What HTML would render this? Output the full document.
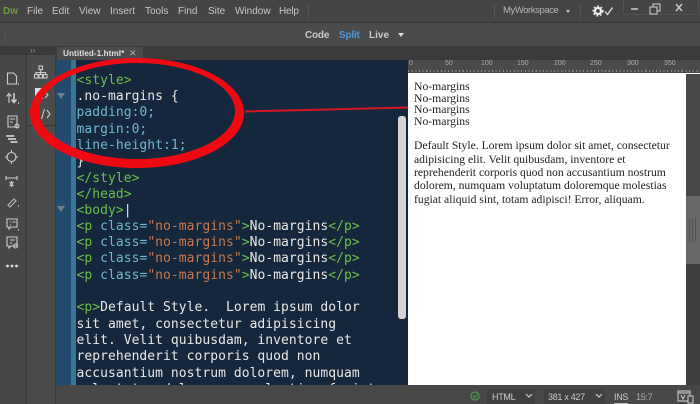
<!DOCTYPE html>
<html><head><meta charset="utf-8">
<style>
html,body{margin:0;padding:0;background:#484848}
#r{position:relative;width:700px;height:404px;overflow:hidden;background:#484848;font-family:"Liberation Sans",sans-serif;color:#ccc;filter:blur(.3px)}
.a{position:absolute}
.m{position:absolute;top:5px;font-size:10px;line-height:13px;color:#c8c8c8;white-space:nowrap}
.c{position:absolute;left:76.5px;font-family:"DejaVu Sans Mono","Liberation Mono",monospace;font-size:13px;letter-spacing:.04px;line-height:16px;color:#e8e8e8;white-space:pre}
.g{color:#6cc04a}.b{color:#6fb9d0}.o{color:#c9784f}.w{color:#e8e8e8}
.p{position:absolute;left:414px;font-family:"Liberation Serif",serif;font-size:11.7px;line-height:12px;color:#222;white-space:nowrap}
.l{position:absolute;left:414px;font-family:"Liberation Serif",serif;font-size:11.65px;line-height:13px;color:#222;white-space:nowrap}
.t{position:absolute;top:60px;font-size:7px;line-height:8px;color:#aaa}
.s{position:absolute;top:391px;font-size:9px;letter-spacing:-.3px;line-height:12px;color:#ccc;white-space:nowrap}
</style></head><body><div id="r">
<!-- bars -->
<div class="a" style="left:0;top:0;width:700px;height:22px;background:#454545"></div>
<div class="a" style="left:0;top:22px;width:700px;height:1px;background:#363636"></div>
<div class="a" style="left:0;top:23px;width:700px;height:23px;background:#4a4a4a"></div>
<div class="a" style="left:0;top:46px;width:700px;height:14px;background:#3b3b3b"></div>
<div class="a" style="left:5px;top:28px;width:1px;height:14px;background:#555"></div>
<div class="m" style="left:3px;color:#6f9a42;font-weight:bold">Dw</div>
<div class="m" style="left:27px">File</div>
<div class="m" style="left:52px">Edit</div>
<div class="m" style="left:79px">View</div>
<div class="m" style="left:110px">Insert</div>
<div class="m" style="left:145px">Tools</div>
<div class="m" style="left:178px">Find</div>
<div class="m" style="left:208px">Site</div>
<div class="m" style="left:235px">Window</div>
<div class="m" style="left:279px;letter-spacing:-.2px">Help</div>
<div class="a" style="left:308px;top:4px;width:1px;height:14px;background:#555"></div>
<div class="a" style="left:494px;top:4px;width:1px;height:14px;background:#555"></div>
<div class="m" style="left:503px;top:4px;font-size:9.5px;letter-spacing:-.42px;color:#b5b5b5">MyWorkspace</div>
<div class="a" style="left:566px;top:10px;border:2.5px solid transparent;border-top:3px solid #ccc;border-bottom:0"></div>
<div class="a" style="left:580px;top:4px;width:1px;height:14px;background:#555"></div>
<svg class="a" style="left:592px;top:4px" width="24" height="14" viewBox="0 0 24 14">
<circle cx="6" cy="7" r="3" fill="none" stroke="#eee" stroke-width="2.2"/><circle cx="6" cy="7" r="4.8" fill="none" stroke="#eee" stroke-width="1.5" stroke-dasharray="1.8 1.8"/>
<path d="M13 7.5l2.5 3 5-7" fill="none" stroke="#ddd" stroke-width="1.3"/></svg>
<div class="a" style="left:623px;top:-2px;width:74px;height:15px;border:1px solid #525252;border-radius:3px"></div>
<svg class="a" style="left:626px;top:2px" width="72" height="14" viewBox="0 0 72 14">
<path d="M5 7h7" stroke="#aaa" stroke-width="2"/>
<path d="M24 5h7v7h-7zM27 5V2h7v7h-3" fill="none" stroke="#bbb" stroke-width="1.2"/>
<path d="M50 2l6 7M56 2l-6 7" stroke="#ccc" stroke-width="1.4"/></svg>
<div class="a" style="left:305px;top:29px;font-size:10px;letter-spacing:-.2px;line-height:13px;font-weight:bold;color:#c8c8c8">Code</div>
<div class="a" style="left:339px;top:29px;font-size:10px;letter-spacing:-.2px;line-height:13px;font-weight:bold;color:#4f97d8">Split</div>
<div class="a" style="left:369px;top:29px;font-size:10px;line-height:13px;font-weight:bold;color:#c8c8c8">Live</div>
<div class="a" style="left:398px;top:33px;border:3.5px solid transparent;border-top:4px solid #ddd;border-bottom:0"></div>
<!-- tab -->
<div class="a" style="left:57px;top:47px;width:86px;height:13px;background:#4b4b4b"></div>
<div class="a" style="left:63px;top:48px;font-size:8.3px;line-height:11px;font-weight:bold;color:#ddd;white-space:nowrap">Untitled-1.html*</div>
<div class="a" style="left:129px;top:47px;font-size:9px;line-height:13px;color:#aaa">✕</div>
<div class="a" style="left:30px;top:46px;font-size:8px;line-height:10px;color:#999">››</div>
<!-- left cols -->
<div class="a" style="left:0;top:55px;width:26px;height:349px;background:#474747"></div>
<div class="a" style="left:26px;top:55px;width:1px;height:349px;background:#383838"></div>
<div class="a" style="left:27px;top:55px;width:28px;height:349px;background:#4b4b4b"></div>
<div class="a" style="left:27px;top:125px;width:28px;height:1px;background:#383838"></div>
<div class="a" style="left:55px;top:55px;width:1px;height:349px;background:#3c3c3c"></div>
<div class="a" style="left:35px;top:88px;width:8px;height:11px;background:#ddd"></div>
<svg class="a" style="left:0;top:60px" width="56" height="220" viewBox="0 0 56 220" fill="none" stroke="#ccc" stroke-width="1.1">
<path d="M7.5 13h6l3 3v8h-9z"/><path d="M18 24h1" stroke-width="1.5"/>
<path d="M9 43v-9M6.500 36.500l2.500-3 2.500 3"/><path d="M14 33v9M11.500 39.500l2.500 3 2.500-3" stroke-width="1.600"/><path d="M18 43h1" stroke-width="1.500"/>
<path d="M8 56h9v11H8z"/><path d="M10 59h5M10 62h3"/><circle cx="17" cy="66" r="2"/>
<path d="M6 76h8M8 79h8M10.500 82h7" stroke-width="1.700"/>
<circle cx="11.500" cy="97" r="4.500"/><path d="M11.500 90v3M11.500 101v3M5 97h3M15 97h3"/>
<path d="M6 118h11M6 116v4M17 116v4"/><path d="M9.500 122l4 4M13.500 122l-4 4M11.500 121v6"/>
<path d="M8 145l6-6 2 2-6 6z" stroke="#bbb"/><path d="M18 146h1" stroke-width="1.500"/>
<path d="M7 159h10v8h-6l-2 2v-2H7z"/><path d="M10 162h1M12.500 162h3M10 165h1"/><path d="M18 170h1" stroke-width="1.500"/>
<path d="M7 177h10v9h-6l-2 2v-2H7z"/><path d="M10 180h5M10 183h2"/><circle cx="15.500" cy="186" r="2"/>
<rect x="39" y="6" width="3.500" height="3.500"/><path d="M40.700 9.500v3M36 14.500v-2h9.500v2M40.700 12.500v2"/><rect x="34.500" y="14.500" width="3.500" height="3.500"/><rect x="39" y="14.500" width="3.500" height="3.500"/><rect x="43.500" y="14.500" width="3.500" height="3.500"/>
<path d="M45 32l3 3-3 3"/>
<path d="M39 50l-3 4 3 4M47 50l3 4-3 4M44.500 49l-3 10"/>
</svg>
<svg class="a" style="left:5px;top:263px" width="14" height="6"><circle cx="2.500" cy="3" r="1.400" fill="#ddd"/><circle cx="7" cy="3" r="1.400" fill="#ddd"/><circle cx="11.500" cy="3" r="1.400" fill="#ddd"/></svg>
<!-- editor -->
<div class="a" style="left:56px;top:60px;width:352px;height:325px;background:#14273c"></div>
<div class="a" style="left:56px;top:60px;width:15px;height:325px;background:#234b6e"></div>
<div class="a" style="left:71px;top:60px;width:5px;height:325px;background:#3c7596"></div>
<div class="a" style="left:57px;top:93px;border:4px solid transparent;border-top:6px solid #6f7f8c;border-bottom:0"></div>
<div class="a" style="left:57px;top:206px;border:4px solid transparent;border-top:6px solid #6f7f8c;border-bottom:0"></div>
<div class="c g" style="top:72.500px">&lt;style&gt;</div>
<div class="c" style="top:89px">.no-margins {</div>
<div class="c b" style="top:105px">padding:0;</div>
<div class="c b" style="top:121.500px">margin:0;</div>
<div class="c b" style="top:138px">line-height:1;</div>
<div class="c" style="top:154px">}</div>
<div class="c g" style="top:170.500px">&lt;/style&gt;</div>
<div class="c g" style="top:186.500px">&lt;/head&gt;</div>
<div class="c g" style="top:202.500px">&lt;body&gt;<span class="w">|</span></div>
<div class="c g" style="top:218.500px">&lt;p <span class="b">class=</span><span class="o">"no-margins"</span>&gt;<span class="w">No-margins</span>&lt;/p&gt;</div>
<div class="c g" style="top:235px">&lt;p <span class="b">class=</span><span class="o">"no-margins"</span>&gt;<span class="w">No-margins</span>&lt;/p&gt;</div>
<div class="c g" style="top:251px">&lt;p <span class="b">class=</span><span class="o">"no-margins"</span>&gt;<span class="w">No-margins</span>&lt;/p&gt;</div>
<div class="c g" style="top:267.500px">&lt;p <span class="b">class=</span><span class="o">"no-margins"</span>&gt;<span class="w">No-margins</span>&lt;/p&gt;</div>
<div class="c g" style="top:300px">&lt;p&gt;<span class="w">Default Style.  Lorem ipsum dolor</span></div>
<div class="c" style="top:316.500px">sit amet, consectetur adipisicing</div>
<div class="c" style="top:332.500px">elit. Velit quibusdam, inventore et</div>
<div class="c" style="top:349px">reprehenderit corporis quod non</div>
<div class="c" style="top:365.500px">accusantium nostrum dolorem, numquam</div>
<div class="c" style="top:381.500px">voluptatum doloremque molestias fugiat</div>
<div class="a" style="left:56px;top:385px;width:352px;height:19px;background:#484848"></div>
<div class="a" style="left:398px;top:116px;width:8px;height:203px;background:#d4d4d4;border-radius:3px"></div>
<!-- ruler -->
<div class="a" style="left:408px;top:60px;width:292px;height:13px;background:#4a4a4a"></div>
<div class="a" style="left:408px;top:70px;width:292px;height:2px;background:repeating-linear-gradient(90deg,#8a8a8a 0 1px,transparent 1px 3.650px)"></div>
<div class="t" style="left:409px">0</div><div class="t" style="left:445px">50</div><div class="t" style="left:481px">100</div><div class="t" style="left:517px">150</div><div class="t" style="left:554px">200</div><div class="t" style="left:590px">250</div><div class="t" style="left:627px">300</div><div class="t" style="left:664px">350</div>
<!-- preview -->
<div class="a" style="left:408px;top:73px;width:292px;height:312px;background:#fff"></div>
<div class="a" style="left:686px;top:74px;width:14px;height:122px;background:#484848"></div>
<div class="a" style="left:686px;top:264px;width:14px;height:121px;background:#3f3f3f"></div>
<div class="a" style="left:686px;top:196px;width:14px;height:68px;background:#686868"></div>
<div class="a" style="left:689px;top:218px;width:7px;height:24px;background:repeating-linear-gradient(90deg,#555 0 1px,transparent 1px 3px)"></div>
<div class="p" style="top:81px">No-margins</div>
<div class="p" style="top:93px">No-margins</div>
<div class="p" style="top:104px">No-margins</div>
<div class="p" style="top:116px">No-margins</div>
<div class="l" style="top:139px">Default Style. Lorem ipsum dolor sit amet, consectetur</div>
<div class="l" style="top:153px">adipisicing elit. Velit quibusdam, inventore et</div>
<div class="l" style="top:166px">reprehenderit corporis quod non accusantium nostrum</div>
<div class="l" style="top:179px">dolorem, numquam voluptatum doloremque molestias</div>
<div class="l" style="top:193px">fugiat aliquid sint, totam adipisci! Error, aliquam.</div>
<!-- status -->
<svg class="a" style="left:469px;top:390px" width="12" height="12" viewBox="0 0 12 12" fill="none" stroke="#4c9a4c" stroke-width="1.200"><circle cx="6" cy="6" r="4"/><path d="M4 6l1.500 1.500L8 4.500"/></svg>
<div class="a" style="left:487px;top:389px;width:48px;height:15px;background:#404040"></div>
<div class="s" style="left:492px">HTML</div>
<svg class="a" style="left:525px;top:393px" width="8" height="6"><path d="M1 1l3 3 3-3" fill="none" stroke="#ccc" stroke-width="1.200"/></svg>
<div class="a" style="left:544px;top:389px;width:61px;height:15px;background:#404040"></div>
<div class="s" style="left:548px">381 x 427</div>
<svg class="a" style="left:595px;top:393px" width="8" height="6"><path d="M1 1l3 3 3-3" fill="none" stroke="#ccc" stroke-width="1.200"/></svg>
<div class="s" style="left:614px;border-bottom:1px solid #bbb">INS</div>
<div class="s" style="left:636px;color:#aaa">15:7</div>
<svg class="a" style="left:677px;top:390px" width="17" height="14" viewBox="0 0 17 14" fill="none" stroke="#bbb" stroke-width="1.200"><path d="M1 1h12v10H1zM1 3h12"/><rect x="11" y="6" width="5" height="7" fill="#484848"/><path d="M4 5l2 4 2-4"/></svg>
<!-- annotation -->
<svg class="a" style="left:0;top:0" width="700" height="404" viewBox="0 0 700 404">
<path fill="#ee0a12" fill-rule="evenodd" d="M30 113a107 55 0 1 0 214 0a107 55 0 1 0-214 0zM39 111a98 48 0 1 1 196 0a98 48 0 1 1-196 0z"/>
<path d="M245 111.500L408 107.500" stroke="#d81420" stroke-width="2"/>
</svg>
</div></body></html>
